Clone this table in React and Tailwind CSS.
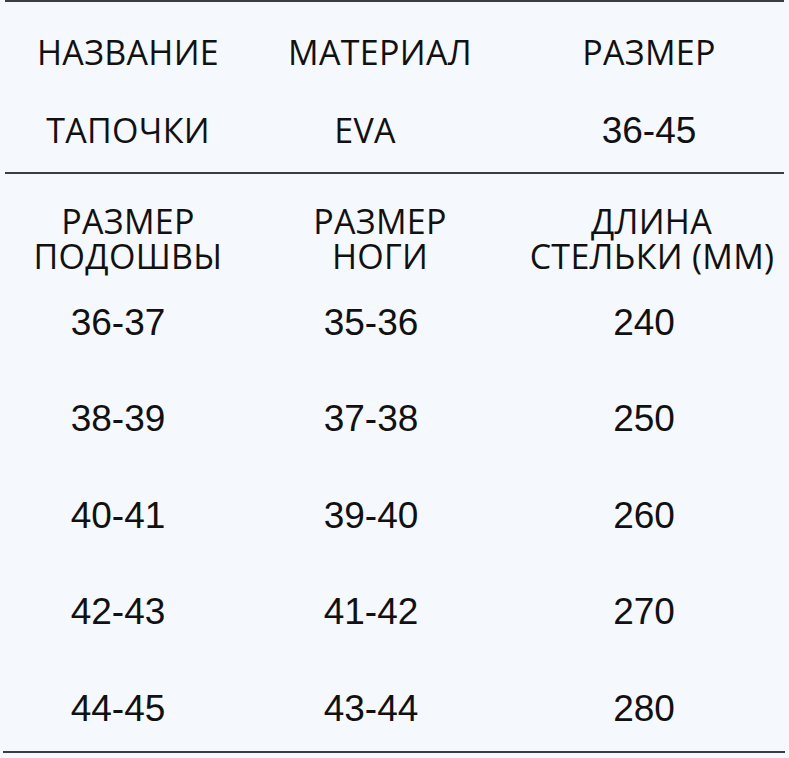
export default function App() {
  const head = "font-['Open_Sans','Noto_Sans',sans-serif] text-[34px] font-medium tracking-[0.3px] text-[#111] leading-none whitespace-nowrap";
  const num = "font-['Liberation_Sans',Arial,sans-serif] text-[37px] text-[#111] leading-none";
  const rows = [
    ["36-37", "35-36", "240"],
    ["38-39", "37-38", "250"],
    ["40-41", "39-40", "260"],
    ["42-43", "41-42", "270"],
    ["44-45", "43-44", "280"],
  ];
  return (
    <div className="w-[789px] h-[758px] bg-[#f5f8fc] overflow-hidden">
      <div className="mx-[5px] h-[2px] bg-[#3a3d42]" />
      <div className="grid grid-cols-[256px_248px_1fr] h-[100px] items-center">
        <div className={`${head} text-center`}>НАЗВАНИЕ</div>
        <div className={`${head} text-center`}>МАТЕРИАЛ</div>
        <div className={`${head} text-center pl-[5px]`}>РАЗМЕР</div>
      </div>
      <div className="grid grid-cols-[256px_248px_1fr] h-[56px] items-center">
        <div className={`${head} text-center`}>ТАПОЧКИ</div>
        <div className={`${head} text-center pr-[30px]`}>EVA</div>
        <div className={`${num} text-center pl-[5px]`}>36-45</div>
      </div>
      <div className="h-[14px]" />
      <div className="mx-[5px] h-[2px] bg-[#3a3d42]" />
      <div className="grid grid-cols-[256px_248px_1fr] pt-[30px]">
        <div className="flex flex-col gap-[1px] text-center">
          <div className={head}>РАЗМЕР</div>
          <div className={head}>ПОДОШВЫ</div>
        </div>
        <div className="flex flex-col gap-[1px] text-center">
          <div className={head}>РАЗМЕР</div>
          <div className={head}>НОГИ</div>
        </div>
        <div className="flex flex-col gap-[1px] text-center">
          <div className={`${head} pl-[10px]`}>ДЛИНА</div>
          <div className={`${head} pl-[11px]`}>СТЕЛЬКИ (ММ)</div>
        </div>
      </div>
      <div className="mt-[25px] flex flex-col gap-[48.5px]">
        {rows.map((r) => (
          <div key={r[0]} className="grid grid-cols-[256px_248px_1fr] h-[48px] items-center">
            <div className={`${num} text-center pr-[20px]`}>{r[0]}</div>
            <div className={`${num} text-center pr-[18px]`}>{r[1]}</div>
            <div className={`${num} text-center pr-[5px]`}>{r[2]}</div>
          </div>
        ))}
      </div>
      <div className="mt-[19px] ml-[3px] mr-[4px] h-[2px] bg-[#3a3d42]" />
    </div>
  );
}
